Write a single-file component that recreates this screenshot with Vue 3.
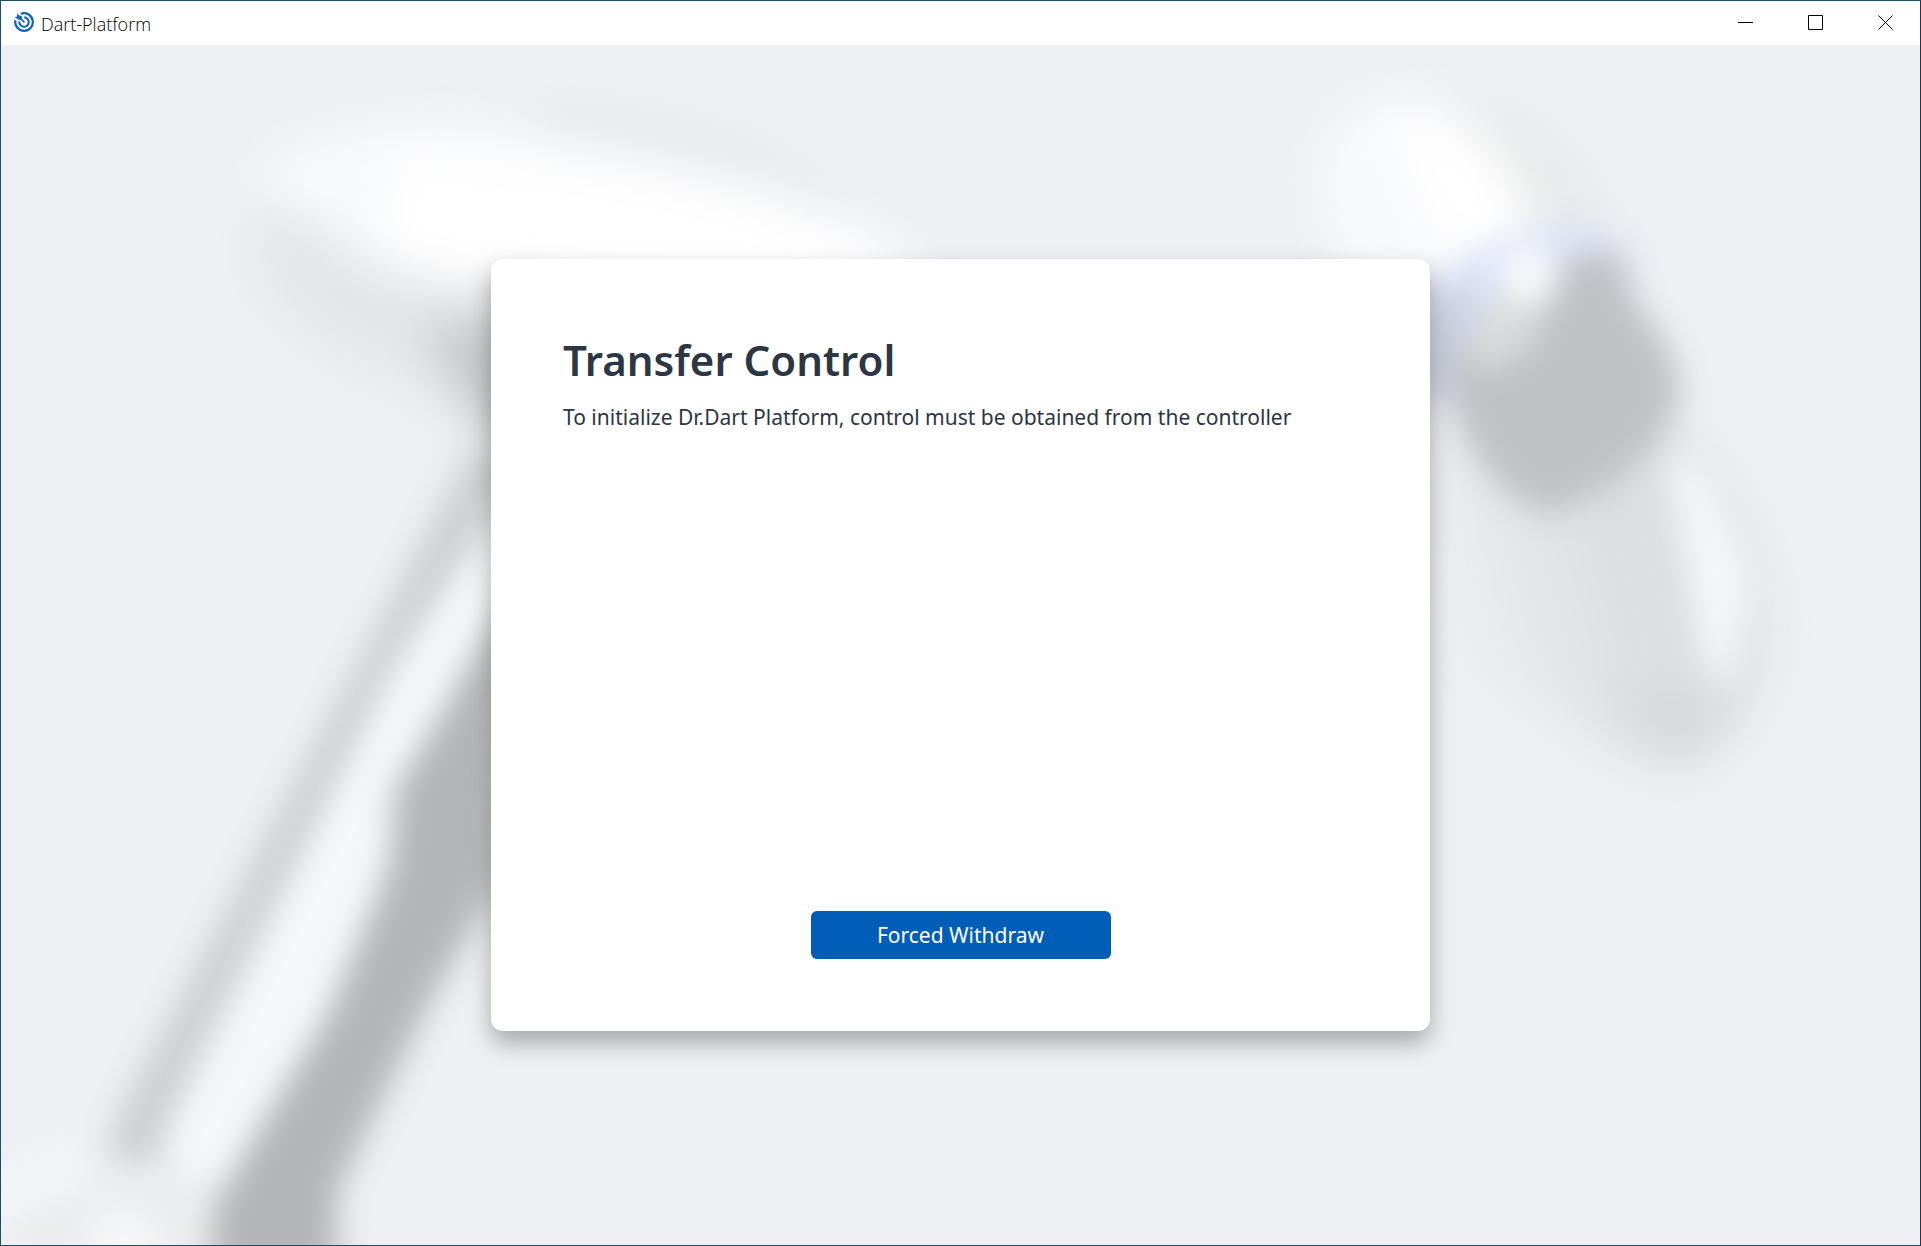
<script setup>
const title = 'Dart-Platform'
</script>

<template>
  <div class="window">
    <header class="titlebar">
      <svg class="logo" viewBox="0 0 20 20" aria-hidden="true">
        <g fill="none" stroke="#1565b8">
          <path d="M6.8 1.8A8.8 8.8 0 1 1 1.4 8.2" stroke-width="2.3" />
          <path d="M10.2 5.4A4.7 4.7 0 1 1 5.4 9.4" stroke-width="2.1" />
          <path d="M4.5 4.5L10.4 10.4" stroke-width="1.6" />
        </g>
        <path d="M3.4 1L4.8 3.2L7.6 4L8.4 8.2L4.2 7.4L.8 5.2L3 4.6Z" fill="#1565b8" />
      </svg>
      <span class="title">{{ title }}</span>
      <div class="controls">
        <button type="button" aria-label="Minimize">
          <svg viewBox="0 0 15 15"><path d="M0 7.5H15" /></svg>
        </button>
        <button type="button" aria-label="Maximize">
          <svg viewBox="0 0 15 15"><path d="M.5 .5H14.5V14.5H.5Z" /></svg>
        </button>
        <button type="button" aria-label="Close">
          <svg viewBox="0 0 15 15"><path d="M.5 .5L14.5 14.5M14.5 .5L.5 14.5" /></svg>
        </button>
      </div>
    </header>

    <main class="stage">
      <svg class="backdrop" viewBox="1 45 1919 1200" preserveAspectRatio="xMidYMid slice" aria-hidden="true">
        <defs>
          <filter id="soft" x="-20%" y="-20%" width="140%" height="140%" color-interpolation-filters="sRGB">
            <feGaussianBlur stdDeviation="22" />
          </filter>
          <filter id="softer" x="-20%" y="-20%" width="140%" height="140%" color-interpolation-filters="sRGB">
            <feGaussianBlur stdDeviation="16" />
          </filter>
          <linearGradient id="forearm" x1="0" y1=".3" x2="1" y2="0">
            <stop offset="0" stop-color="#ecedef" />
            <stop offset=".5" stop-color="#dcdddf" />
            <stop offset="1" stop-color="#e9eaed" />
          </linearGradient>
        </defs>

        <!-- upper arm and elbow -->
        <g filter="url(#soft)">
          <path d="M520 110Q700 110 830 190L860 240L560 180Z" fill="#e6e7e8" />
          <path d="M262 190L252 270Q300 350 410 385L480 440L560 450L560 240L330 180Z" fill="#e5e6e8" />
          <path d="M420 330L460 390L490 440L560 440L560 310Z" fill="#c6c7c9" />
          <path d="M260 170Q330 120 470 125Q640 145 780 190Q890 235 930 280L400 275Q330 240 310 215L262 195Z" fill="#f8f9fb" />
          <path d="M400 150L560 165Q780 195 890 255L920 290L440 280L380 235Z" fill="#fff" />
        </g>

        <!-- lower arm -->
        <g filter="url(#softer)">
          <path d="M470 450L520 450L520 560L180 1165L108 1160L115 1120Z" fill="#cdced0" />
          <path d="M510 490L550 490L400 830L250 1180L160 1170Q160 1140 180 1100L395 665Z" fill="#f6f7f9" />
          <path d="M505 600L440 715L392 795Q397 840 382 885L330 1010L240 1160L212 1210L212 1290L335 1290L338 1190L428 1005L500 880Z" fill="#b4b5b8" />
          <path d="M0 1190L110 1170L180 1160L215 1190L205 1290L0 1290Z" fill="#ecedee" />
          <path d="M95 1215L145 1215L165 1280L90 1280Z" fill="#f6f7f9" />
          <path d="M-30 1190L70 1140L90 1180L-30 1230Z" fill="#f4f5f8" />
        </g>

        <!-- wrist and tool -->
        <g filter="url(#soft)">
          <path d="M1450 95Q1580 120 1610 240L1540 260Z" fill="#e8e9e9" />
          <path d="M1430 400L1440 620Q1500 700 1560 715Q1620 770 1680 768Q1750 740 1776 648Q1780 520 1680 430Z" fill="url(#forearm)" />
          <path d="M1600 690L1740 700Q1720 760 1675 765Z" fill="#d7d8db" />
          <path d="M1318 190Q1320 98 1400 98Q1490 98 1540 240L1440 290L1340 270Z" fill="#f8f9fb" />
          <path d="M1385 125Q1460 95 1520 190L1530 250L1440 250Z" fill="#fff" />
        </g>
        <g filter="url(#softer)">
          <path d="M1670 450L1705 470L1748 580L1728 690L1705 660Z" fill="#f6f7f9" />
          <path d="M1420 380L1425 290Q1470 245 1560 223Q1610 223 1635 265L1620 330L1460 400Z" fill="#dde2f7" />
          <path d="M1445 390Q1455 330 1520 290L1580 255L1620 250L1635 300Q1675 345 1682 390L1668 430Q1610 500 1545 514Q1480 490 1445 390Z" fill="#c0c1c5" />
          <path d="M1420 330L1440 290L1475 290L1440 400L1420 400Z" fill="#c6cbdb" />
          <path d="M1470 345L1490 300L1550 300L1530 350L1475 375Z" fill="#dadbdb" />
          <circle cx="1530" cy="276" r="28" fill="#fbfcfd" />
        </g>
      </svg>

      <section class="card" aria-labelledby="dialog-title">
        <h1 id="dialog-title">Transfer Control</h1>
        <p>To initialize Dr.Dart Platform, control must be obtained from the controller</p>
        <button type="button" class="primary">Forced Withdraw</button>
      </section>
    </main>
  </div>
</template>

<style>
body {
  margin: 0;
}
</style>

<style scoped>
.window {
  box-sizing: border-box;
  display: flex;
  flex-direction: column;
  min-height: 100vh;
  border: 1px solid #1b4f6c;
  border-right-color: #1b3463;
  background: #eff0f4;
  font-family: "Noto Sans", sans-serif;
  color: #2c3644;
}

.titlebar {
  display: flex;
  align-items: center;
  height: 44px;
  padding-left: 13px;
  background: #fff;
}

.logo {
  width: 20px;
  height: 20px;
  margin: 0 7px 2px 0;
}

.title {
  padding-top: 2px;
  font-family: "Open Sans", "Noto Sans", sans-serif;
  font-size: 18px;
  font-weight: 300;
  line-height: 24px;
  color: #000;
}

.controls {
  display: flex;
  align-self: stretch;
  margin-left: auto;
}

.controls button {
  display: grid;
  place-items: center;
  width: 70px;
  padding: 0 0 2px;
  border: 0;
  background: transparent;
}

.controls svg {
  width: 15px;
  height: 15px;
  fill: none;
  stroke: #000;
  stroke-width: 1;
}

.stage {
  position: relative;
  display: grid;
  place-items: center;
  flex: 1;
  padding: 24px;
  overflow: hidden;
}

.backdrop {
  position: absolute;
  inset: 0;
  width: 100%;
  height: 100%;
}

.card {
  position: relative;
  box-sizing: border-box;
  display: flex;
  flex-direction: column;
  width: 100%;
  max-width: 939px;
  min-height: 772px;
  padding: 72px;
  border-radius: 12px;
  background: #fff;
  box-shadow: 0 12px 24px rgba(0, 0, 0, 0.3);
}

h1 {
  margin: 0;
  font-size: 42px;
  font-weight: 600;
  line-height: 58px;
}

p {
  margin: 12px 0 0;
  font-size: 21px;
  line-height: 32px;
}

.primary {
  align-self: center;
  width: 300px;
  height: 48px;
  margin-top: auto;
  border: 0;
  border-radius: 6px;
  background: #005eb8;
  font-family: inherit;
  font-size: 21px;
  color: #fff;
}
</style>
